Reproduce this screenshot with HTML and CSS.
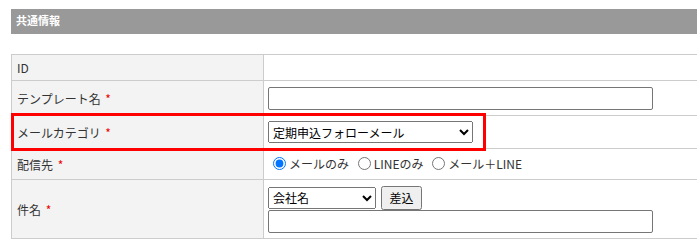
FILE: index.html
```html
<!DOCTYPE html>
<html lang="ja">

<head>
    <meta charset="UTF-8">
    <meta name="viewport" content="width=device-width, initial-scale=1.0">
    <title>共通情報</title>
    <link rel="stylesheet" href="styles.css">
</head>

<body>
    <div class="page">
        <h2 class="section-title">共通情報</h2>

        <div class="form-wrap">
            <table class="form-table">
                <tr class="row-id">
                    <th>ID</th>
                    <td></td>
                </tr>
                <tr class="row-name">
                    <th>テンプレート名 <span class="req">*</span></th>
                    <td><input type="text" class="text-long"></td>
                </tr>
                <tr class="row-category">
                    <th>メールカテゴリ <span class="req">*</span></th>
                    <td>
                        <select class="select-category">
                            <option>定期申込フォローメール</option>
                        </select>
                    </td>
                </tr>
                <tr class="row-dest">
                    <th>配信先 <span class="req">*</span></th>
                    <td>
                        <label class="radio"><input type="radio" name="dest" checked>メールのみ</label>
                        <label class="radio"><input type="radio" name="dest">LINEのみ</label>
                        <label class="radio"><input type="radio" name="dest">メール＋LINE</label>
                    </td>
                </tr>
                <tr class="row-subject">
                    <th>件名 <span class="req">*</span></th>
                    <td>
                        <div class="insert-line">
                            <select class="select-field">
                                <option>会社名</option>
                            </select>
                            <button type="button" class="btn-insert">差込</button>
                        </div>
                        <input type="text" class="text-long">
                    </td>
                </tr>
            </table>

            <!-- highlight around the category row -->
            <div class="highlight"></div>
        </div>
    </div>
</body>

</html>
```

FILE: styles.css
```css
html,
body {
    margin: 0;
    overflow: hidden;
}

body {
    font-family: "Noto Sans CJK JP", "Noto Sans", sans-serif;
    font-size: 12px;
    color: #333;
    background: #fff;
}

.page {
    padding: 9px 0 0 11px;
    width: 720px;
}

.section-title {
    margin: 0;
    height: 25px;
    box-sizing: border-box;
    padding: 4px 0 0 5px;
    background-color: #999;
    color: #fff;
    font-size: 11px;
    font-weight: bold;
    line-height: 15px;
}

.form-wrap {
    position: relative;
    margin-top: 20px;
}

.form-table {
    border-collapse: collapse;
    width: 100%;
}

.form-table th,
.form-table td {
    border: 1px solid #ccc;
    padding: 0 0 0 4px;
    vertical-align: middle;
}

.form-table th {
    width: 246px;
    padding-left: 5px;
    background-color: #f2f3f2;
    text-align: left;
    font-weight: normal;
    color: #333;
}

.row-id th,
.row-id td {
    height: 25px;
}

.row-name th,
.row-name td {
    height: 34px;
}

.row-category th,
.row-category td {
    height: 32px;
}

.row-dest th,
.row-dest td {
    height: 30px;
}

.row-subject th,
.row-subject td {
    height: 58px;
}

.req {
    color: #e00;
    margin-left: 2px;
}

input,
select,
button {
    font-family: inherit;
    font-size: 12px;
    box-sizing: border-box;
    margin: 0;
}

.text-long {
    display: block;
    width: 385px;
    height: 23px;
    border: 1px solid #767676;
    border-radius: 2px;
}

.select-category {
    display: block;
    width: 205px;
    height: 22px;
}

.radio {
    display: inline-flex;
    align-items: center;
    margin-right: 1px;
}

.radio input {
    margin: 0 3px 0 5px;
}

.insert-line {
    display: flex;
    align-items: center;
    gap: 5px;
}

.select-field {
    width: 108px;
    height: 22px;
}

.btn-insert {
    width: 41px;
    height: 24px;
    padding: 0;
}

.highlight {
    position: absolute;
    left: 0;
    top: 59px;
    width: 475px;
    height: 38px;
    box-sizing: border-box;
    border: 3px solid #f00;
    pointer-events: none;
}
```
